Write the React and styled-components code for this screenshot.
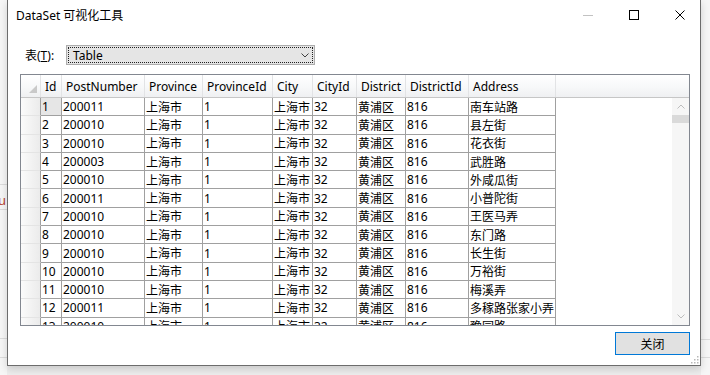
import React from 'react';
import styled, { createGlobalStyle } from 'styled-components';

const GlobalStyle = createGlobalStyle`
  html, body {
    margin: 0;
    padding: 0;
    background: #efefef;
  }
  body {
    font-family: "Noto Sans", "Noto Sans CJK SC", sans-serif;
    overflow: hidden;
  }
`;

const Screen = styled.div`
  display: flex;
  width: 710px;
  height: 375px;
  background: #ededed;
  overflow: hidden;
`;

const SideStrip = styled.div`
  flex: 0 0 ${p => p.w}px;
  display: flex;
  flex-direction: column;
  background: #f6f6f6;
  overflow: hidden;
`;

const StripGap = styled.div`
  flex: 0 0 ${p => p.h}px;
`;

const StripLine = styled.div`
  height: 1px;
  background: #dcdcdc;
`;

const StripText = styled.div`
  height: 14px;
  margin-left: -2px;
  font-size: 13px;
  line-height: 14px;
  color: #b5412f;
`;

const Window = styled.div`
  flex: 0 0 694px;
  height: 366px;
  box-sizing: border-box;
  border: 1px solid #6c6c6c;
  border-top: none;
  background: #fff;
  box-shadow: 0 3px 8px rgba(0, 0, 0, 0.16);
  display: flex;
  flex-direction: column;
  position: relative;
  z-index: 1;
`;

const TitleBar = styled.div`
  height: 30px;
  flex: 0 0 30px;
  display: flex;
  align-items: center;
  padding-left: 8px;
  overflow: hidden;
`;

const Title = styled.div`
  flex: 1;
  font-size: 12px;
  color: #000;
`;

const Controls = styled.div`
  display: flex;
  margin-right: -3px;
`;

const CaptionButton = styled.div`
  width: 46px;
  height: 30px;
  display: flex;
  align-items: center;
  justify-content: center;
`;

const Body = styled.div`
  flex: 1;
  display: flex;
  flex-direction: column;
  padding: 15px 10px 0 12px;
`;

const ToolRow = styled.div`
  display: flex;
  align-items: center;
  height: 20px;
  padding-left: 5px;
`;

const FieldLabel = styled.div`
  width: 41px;
  font-size: 12px;
  color: #000;
  u { text-decoration: underline; }
`;

const Select = styled.div`
  width: 249px;
  height: 20px;
  box-sizing: border-box;
  border: 1px solid #adadad;
  background: #e5e5e5;
  padding: 1px;
  display: flex;
`;

const FocusRing = styled.div`
  flex: 1;
  display: flex;
  align-items: center;
  justify-content: space-between;
  border: 1px dotted #202020;
  padding: 0 3px 0 4px;
  font-size: 12px;
  color: #000;
`;

const Grid = styled.div`
  margin-top: 9px;
  height: 252px;
  box-sizing: border-box;
  border: 1px solid #828790;
  background: #fff;
  display: flex;
  flex-direction: column;
  overflow: hidden;
`;

const HeaderRow = styled.div`
  display: flex;
  flex: 0 0 23px;
  box-sizing: border-box;
  border-bottom: 1px solid #c6c6c6;
  background: linear-gradient(to bottom, #ffffff 0%, #f7f8f9 55%, #eff0f2 100%);
`;

const HeaderCell = styled.div`
  width: ${p => p.w}px;
  flex: 0 0 ${p => p.w}px;
  box-sizing: border-box;
  border-right: 1px solid #e2e3e5;
  padding-left: 4px;
  display: flex;
  align-items: center;
  font-size: 12px;
  color: #000;
  white-space: nowrap;
  overflow: hidden;
`;

const CornerCell = styled.div`
  flex: 0 0 20px;
  box-sizing: border-box;
  border-right: 1px solid #e2e3e5;
  display: flex;
  align-items: flex-end;
  justify-content: flex-end;
  padding: 0 3px 4px 0;
`;

const GridBody = styled.div`
  flex: 1;
  display: flex;
  min-height: 0;
`;

const Rows = styled.div`
  flex: 1;
  overflow: hidden;
`;

const Row = styled.div`
  display: flex;
  height: 18.3px;
`;

const RowHeader = styled.div`
  flex: 0 0 20px;
  box-sizing: border-box;
  border-right: 1px solid #a0a0a0;
  border-bottom: 1px solid #e4e4e4;
  background: linear-gradient(to right, #fbfbfb, #ebebeb);
`;

const Cell = styled.div`
  width: ${p => p.w}px;
  flex: 0 0 ${p => p.w}px;
  box-sizing: border-box;
  border-right: 1px solid #a0a0a0;
  border-bottom: 1px solid #a0a0a0;
  background: ${p => (p.current ? '#e6e6e6' : '#fff')};
  padding-left: 1px;
  display: flex;
  align-items: center;
  font-size: 12px;
  color: #000;
  white-space: nowrap;
  overflow: hidden;
`;

const Scrollbar = styled.div`
  flex: 0 0 17px;
  display: flex;
  flex-direction: column;
  background: #f6f6f6;
`;

const ScrollArrow = styled.div`
  flex: 0 0 17px;
  display: flex;
  align-items: center;
  justify-content: center;
`;

const Thumb = styled.div`
  flex: 0 0 8px;
  background: #dadada;
`;

const Track = styled.div`
  flex: 1;
`;

const Footer = styled.div`
  display: flex;
  justify-content: flex-end;
  margin-top: 6px;
`;

const CloseButton = styled.button`
  width: 75px;
  height: 23px;
  box-sizing: border-box;
  border: 1px solid #0078d7;
  background: #e1e1e1;
  padding: 0;
  font-family: inherit;
  font-size: 12px;
  color: #000;
`;

const Grip = styled.svg`
  position: absolute;
  right: 1px;
  bottom: 1px;
`;

const columns = [
  { key: 'id', label: 'Id', w: 21 },
  { key: 'post', label: 'PostNumber', w: 83 },
  { key: 'prov', label: 'Province', w: 58 },
  { key: 'provId', label: 'ProvinceId', w: 70 },
  { key: 'city', label: 'City', w: 40 },
  { key: 'cityId', label: 'CityId', w: 44 },
  { key: 'dist', label: 'District', w: 49 },
  { key: 'distId', label: 'DistrictId', w: 63 },
  { key: 'addr', label: 'Address', w: 87 },
];

const streets = [
  ['200011', '南车站路'],
  ['200010', '县左街'],
  ['200010', '花衣街'],
  ['200003', '武胜路'],
  ['200010', '外咸瓜街'],
  ['200011', '小普陀街'],
  ['200010', '王医马弄'],
  ['200010', '东门路'],
  ['200010', '长生街'],
  ['200010', '万裕街'],
  ['200010', '梅溪弄'],
  ['200011', '多稼路张家小弄'],
  ['200010', '豫园路'],
];

const rows = streets.map(([post, addr], i) => ({
  id: String(i + 1),
  post,
  prov: '上海市',
  provId: '1',
  city: '上海市',
  cityId: '32',
  dist: '黄浦区',
  distId: '816',
  addr,
}));

const Chevron = ({ up, color = '#555' }) => (
  <svg width="8" height="5" viewBox="0 0 8 5">
    <polyline
      points={up ? '0.5,4.5 4,1 7.5,4.5' : '0.5,0.5 4,4 7.5,0.5'}
      fill="none"
      stroke={color}
      strokeWidth="1"
    />
  </svg>
);

export default function App() {
  return (
    <>
      <GlobalStyle />
      <Screen>
        <SideStrip w={7}>
          <StripGap h={184} />
          <StripLine />
          <StripGap h={8} />
          <StripText>u</StripText>
          <StripGap h={2} />
          <StripLine />
          <StripGap h={128} />
          <StripLine />
          <StripGap h={18} />
          <StripLine />
        </SideStrip>

        <Window>
          <TitleBar>
            <Title>DataSet 可视化工具</Title>
            <Controls>
              <CaptionButton>
                <svg width="10" height="1"><rect width="10" height="1" fill="#c2c2c2" /></svg>
              </CaptionButton>
              <CaptionButton>
                <svg width="10" height="10"><rect x="0.5" y="0.5" width="9" height="9" fill="none" stroke="#000" /></svg>
              </CaptionButton>
              <CaptionButton>
                <svg width="10" height="10">
                  <path d="M0.5 0.5 L9.5 9.5 M9.5 0.5 L0.5 9.5" stroke="#000" strokeWidth="1" />
                </svg>
              </CaptionButton>
            </Controls>
          </TitleBar>

          <Body>
            <ToolRow>
              <FieldLabel>表(<u>T</u>):</FieldLabel>
              <Select>
                <FocusRing>
                  <span>Table</span>
                  <Chevron color="#404040" />
                </FocusRing>
              </Select>
            </ToolRow>

            <Grid>
              <HeaderRow>
                <CornerCell>
                  <svg width="8" height="8"><polygon points="8,0 8,8 0,8" fill="#c9c9c9" /></svg>
                </CornerCell>
                {columns.map(c => (
                  <HeaderCell key={c.key} w={c.w}>{c.label}</HeaderCell>
                ))}
              </HeaderRow>
              <GridBody>
                <Rows>
                  {rows.map((r, i) => (
                    <Row key={r.id}>
                      <RowHeader />
                      {columns.map(c => (
                        <Cell key={c.key} w={c.w} current={i === 0 && c.key === 'id'}>
                          {r[c.key]}
                        </Cell>
                      ))}
                    </Row>
                  ))}
                </Rows>
                <Scrollbar>
                  <ScrollArrow><Chevron up color="#bdbdbd" /></ScrollArrow>
                  <Thumb />
                  <Track />
                  <ScrollArrow><Chevron color="#bdbdbd" /></ScrollArrow>
                </Scrollbar>
              </GridBody>
            </Grid>

            <Footer>
              <CloseButton>关闭</CloseButton>
            </Footer>
          </Body>

          <Grip width="10" height="10" viewBox="0 0 10 10">
            {[[8, 2], [8, 5], [8, 8], [5, 5], [5, 8], [2, 8]].map(([x, y]) => (
              <rect key={`${x}-${y}`} x={x} y={y} width="1.5" height="1.5" fill="#b8b8b8" />
            ))}
          </Grip>
        </Window>

        <SideStrip w={9}>
          <StripGap h={339} />
          <StripLine />
          <StripGap h={17} />
          <StripLine />
        </SideStrip>
      </Screen>
    </>
  );
}
